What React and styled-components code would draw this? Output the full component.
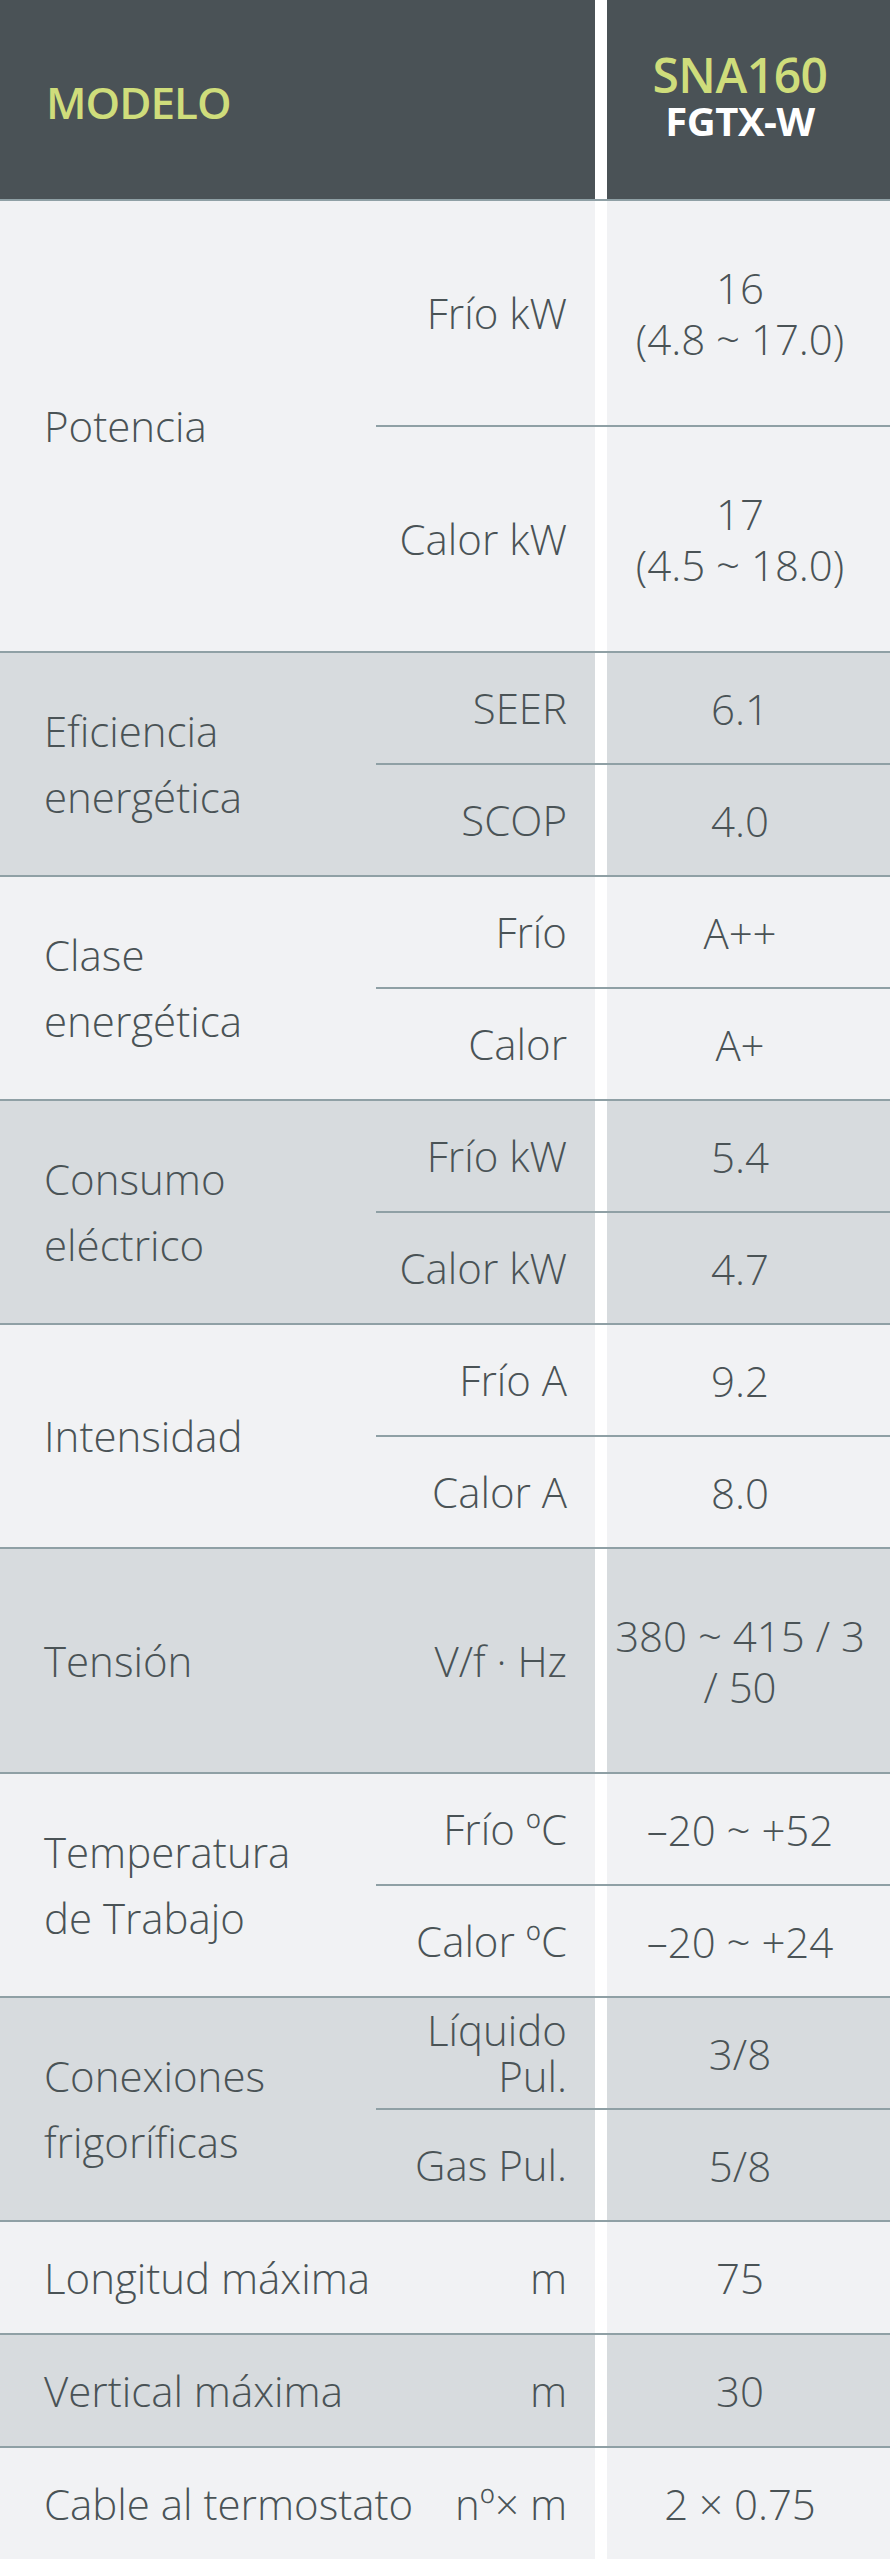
import React from "react";
import styled, { createGlobalStyle } from "styled-components";

const GlobalStyle = createGlobalStyle`
  body {
    margin: 0;
    background: #ffffff;
    font-family: "Open Sans", "Noto Sans", sans-serif;
    color: #4a5356;
  }
`;

const LIGHT = "#f1f2f4";
const DARK = "#d7dbde";
const LINE = "#8fa0a5";

const specs = [
  {
    label: ["Potencia"],
    tall: true,
    rows: [
      { name: ["Frío kW"], value: ["16", "(4.8 ~ 17.0)"] },
      { name: ["Calor kW"], value: ["17", "(4.5 ~ 18.0)"] },
    ],
  },
  {
    label: ["Eficiencia", "energética"],
    rows: [
      { name: ["SEER"], value: ["6.1"] },
      { name: ["SCOP"], value: ["4.0"] },
    ],
  },
  {
    label: ["Clase", "energética"],
    rows: [
      { name: ["Frío"], value: ["A++"] },
      { name: ["Calor"], value: ["A+"] },
    ],
  },
  {
    label: ["Consumo", "eléctrico"],
    rows: [
      { name: ["Frío kW"], value: ["5.4"] },
      { name: ["Calor kW"], value: ["4.7"] },
    ],
  },
  {
    label: ["Intensidad"],
    rows: [
      { name: ["Frío A"], value: ["9.2"] },
      { name: ["Calor A"], value: ["8.0"] },
    ],
  },
  {
    label: ["Tensión"],
    single: true,
    tall: true,
    unit: "V/f · Hz",
    value: ["380 ~ 415 / 3", "/ 50"],
  },
  {
    label: ["Temperatura", "de Trabajo"],
    rows: [
      { name: ["Frío ºC"], value: ["–20 ~ +52"] },
      { name: ["Calor ºC"], value: ["–20 ~ +24"] },
    ],
  },
  {
    label: ["Conexiones", "frigoríficas"],
    rows: [
      { name: ["Líquido", "Pul."], value: ["3/8"] },
      { name: ["Gas Pul."], value: ["5/8"] },
    ],
  },
  { label: ["Longitud máxima"], single: true, unit: "m", value: ["75"] },
  { label: ["Vertical máxima"], single: true, unit: "m", value: ["30"] },
  { label: ["Cable al termostato"], single: true, unit: "nº× m", value: ["2 × 0.75"] },
];

const lines = (arr) =>
  arr.map((t, i) => (
    <React.Fragment key={i}>
      {i > 0 && <br />}
      {t}
    </React.Fragment>
  ));

const App = () => {
  return (
    <>
      <GlobalStyle />
      <Table>
        <Header>
          <HeadCell>
            <ModelTitle>MODELO</ModelTitle>
          </HeadCell>
          <HeadCell $center>
            <ModelName>SNA160</ModelName>
            <ModelCode>FGTX-W</ModelCode>
          </HeadCell>
        </Header>

        {specs.map((group, gi) => {
          const shade = gi % 2 === 0 ? LIGHT : DARK;

          if (group.single) {
            return (
              <SingleRow key={gi} $tall={group.tall}>
                <SingleLeft $bg={shade}>
                  <Label>{lines(group.label)}</Label>
                  <SubLabel>{group.unit}</SubLabel>
                </SingleLeft>
                <ValueCell $bg={shade}>{lines(group.value)}</ValueCell>
              </SingleRow>
            );
          }

          return (
            <Group key={gi}>
              <LabelCell $bg={shade}>
                <Label>{lines(group.label)}</Label>
              </LabelCell>
              <SubRows>
                {group.rows.map((row, ri) => (
                  <SubRow key={ri} $tall={group.tall}>
                    <SubLabelCell $bg={shade}>
                      <SubLabel>{lines(row.name)}</SubLabel>
                    </SubLabelCell>
                    <ValueCell $bg={shade}>{lines(row.value)}</ValueCell>
                  </SubRow>
                ))}
              </SubRows>
            </Group>
          );
        })}
      </Table>
    </>
  );
};

const Table = styled.div`
  width: 890px;
  display: flex;
  flex-direction: column;
`;

const Header = styled.div`
  display: grid;
  grid-template-columns: 595px 1fr;
  column-gap: 12px;
  height: 199px;
  background: #ffffff;
`;

const HeadCell = styled.div`
  background: #4a5256;
  display: flex;
  flex-direction: column;
  justify-content: center;
  align-items: ${({ $center }) => ($center ? "center" : "flex-start")};
  padding: ${({ $center }) => ($center ? "0 17px 6px 0" : "4px 0 0 46px")};
`;

const ModelTitle = styled.div`
  font-size: 44px;
  font-weight: 600;
  letter-spacing: -1px;
  color: #cfdd7b;
  line-height: 1;
`;

const ModelName = styled.div`
  font-size: 48px;
  font-weight: 600;
  letter-spacing: -0.5px;
  color: #cfdd7b;
  line-height: 48px;
`;

const ModelCode = styled.div`
  font-size: 40px;
  font-weight: 700;
  letter-spacing: -0.5px;
  color: #ffffff;
  line-height: 44px;
`;

const Group = styled.div`
  display: grid;
  grid-template-columns: 376px 1fr;
  border-top: 2px solid ${LINE};
`;

const LabelCell = styled.div`
  background: ${({ $bg }) => $bg};
  display: flex;
  align-items: center;
  padding-left: 44px;
`;

const Label = styled.div`
  font-size: 42px;
  font-weight: 300;
  line-height: 66px;
  white-space: nowrap;
`;

const SubRows = styled.div`
  display: flex;
  flex-direction: column;
`;

const SubRow = styled.div`
  display: grid;
  grid-template-columns: 219px 1fr;
  column-gap: 12px;
  height: ${({ $tall }) => ($tall ? "224px" : "110px")};

  & + & {
    border-top: 2px solid ${LINE};
  }
`;

const SubLabelCell = styled.div`
  background: ${({ $bg }) => $bg};
  display: flex;
  align-items: center;
  justify-content: flex-end;
  padding-right: 28px;
  text-align: right;
`;

const SubLabel = styled.div`
  font-size: 42px;
  font-weight: 300;
  line-height: 46px;
  text-align: right;
  white-space: nowrap;
`;

const ValueCell = styled.div`
  background: ${({ $bg }) => $bg};
  display: flex;
  align-items: center;
  justify-content: center;
  text-align: center;
  padding-right: 17px;
  font-size: 42px;
  font-weight: 300;
  line-height: 51px;
`;

const SingleRow = styled.div`
  display: grid;
  grid-template-columns: 595px 1fr;
  column-gap: 12px;
  border-top: 2px solid ${LINE};
  height: ${({ $tall }) => ($tall ? "223px" : "111px")};
`;

const SingleLeft = styled.div`
  background: ${({ $bg }) => $bg};
  display: flex;
  align-items: center;
  justify-content: space-between;
  padding: 0 28px 0 44px;
`;

export default App;
